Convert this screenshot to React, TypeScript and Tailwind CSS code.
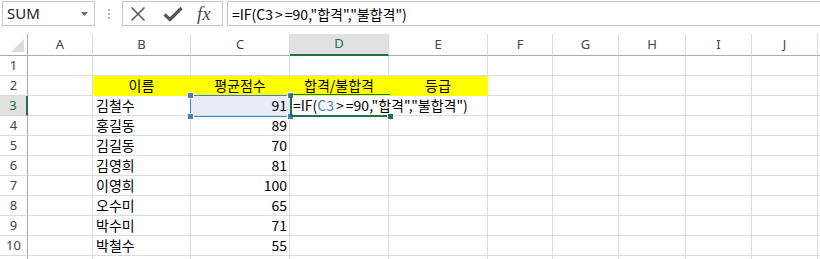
import React from "react"

const colLetters = ["A", "B", "C", "D", "E", "F", "G", "H", "I", "J"]

const rows: { n: number; b?: string; c?: string }[] = [
    { n: 1 },
    { n: 2 },
    { n: 3, b: "김철수", c: "91" },
    { n: 4, b: "홍길동", c: "89" },
    { n: 5, b: "김길동", c: "70" },
    { n: 6, b: "김영희", c: "81" },
    { n: 7, b: "이영희", c: "100" },
    { n: 8, b: "오수미", c: "65" },
    { n: 9, b: "박수미", c: "71" },
    { n: 10, b: "박철수", c: "55" },
    { n: 11 },
]

const headers2 = ["이름", "평균점수", "합격/불합격", "등급"]

const cell = "h-[20px] border-r border-b border-[#dadcdd] text-[14px] leading-[19px] whitespace-nowrap"

const Formula = ({ blue }: { blue?: boolean }) => (
    <span>
        =IF(<span className={blue ? "text-[#3f7bd8]" : ""}>C3</span>
        <span className="mx-[2px]">&gt;</span>=90,"합격","불합격")
    </span>
)

export default function App() {
    return (
        <div className="w-[820px] h-[259px] overflow-hidden bg-white text-black font-['Noto_Sans_CJK_KR','Noto_Sans',sans-serif]">
            {/* formula bar */}
            <div className="flex h-[27px] items-start pt-[1px]">
                <div className="ml-[2px] w-[93px] h-[25px] border border-[#c6c6c6] flex items-center justify-between pl-[4px] pr-[6px]">
                    <span className="text-[15px] text-[#222] font-['Noto_Sans',sans-serif]">SUM</span>
                    <svg width="7" height="4" viewBox="0 0 7 4">
                        <polygon points="0,0 7,0 3.5,4" fill="#6b6b6b" />
                    </svg>
                </div>
                <div className="w-[27px] h-[25px] flex flex-col items-center justify-center gap-[2px]">
                    <span className="w-[2px] h-[2px] bg-[#b5b5b5]" />
                    <span className="w-[2px] h-[2px] bg-[#b5b5b5]" />
                    <span className="w-[2px] h-[2px] bg-[#b5b5b5]" />
                </div>
                <div className="w-[101px] h-[25px] border border-[#c6c6c6] flex items-center pl-[7px]">
                    <svg width="16" height="16" viewBox="0 0 16 16">
                        <path d="M1.5 1.5 L14.5 14.5 M14.5 1.5 L1.5 14.5" stroke="#5a5a5a" strokeWidth="1.6" fill="none" />
                    </svg>
                    <svg width="20" height="16" viewBox="0 0 20 16" className="ml-[17px]">
                        <path d="M1.5 8.5 L7 13.5 L18.5 2" stroke="#555" strokeWidth="3.2" fill="none" />
                    </svg>
                    <span className="ml-[14px] text-[19px] leading-none italic text-[#4a4a4a] font-['Liberation_Serif',serif]">fx</span>
                </div>
                <div className="ml-[4px] flex-1 h-[25px] border-y border-l border-[#c6c6c6] flex items-center pl-[4px] text-[14px] leading-none">
                    <Formula />
                </div>
            </div>

            {/* sheet */}
            <div className="relative mt-[7px] grid grid-cols-[28px_65px_98px_99px_99px_99px_65px_66px_67px_66px_66px_1fr]">
                {/* column headers */}
                <div className="h-[22px] border-r border-b border-r-[#ababab] border-b-[#ababab] flex items-end justify-end pr-[3px] pb-[3px]">
                    <svg width="13" height="13" viewBox="0 0 13 13">
                        <polygon points="13,0 13,13 0,13" fill="#dcdcdc" />
                    </svg>
                </div>
                {colLetters.map((l) => (
                    <div
                        key={l}
                        className={
                            l === "D"
                                ? "h-[22px] border-r border-[#dadcdd] border-b-2 border-b-[#217346] bg-[#e1e1e1] text-[#217346] flex items-center justify-center text-[13px] font-['Noto_Sans',sans-serif]"
                                : "h-[22px] border-r border-r-[#dadcdd] border-b border-b-[#ababab] text-[#444] flex items-center justify-center text-[13px] font-['Noto_Sans',sans-serif]"
                        }
                    >
                        {l}
                    </div>
                ))}
                <div className="h-[22px] border-b border-b-[#ababab]" />

                {rows.map((r) => (
                    <React.Fragment key={r.n}>
                        <div
                            className={
                                r.n === 3
                                    ? "h-[20px] border-r-2 border-r-[#217346] border-b border-b-[#dadcdd] bg-[#e1e1e1] text-[#217346] flex items-center justify-center text-[13px] font-['Noto_Sans',sans-serif]"
                                    : "h-[20px] border-r border-r-[#ababab] border-b border-b-[#dadcdd] text-[#444] flex items-center justify-center text-[13px] font-['Noto_Sans',sans-serif]"
                            }
                        >
                            {r.n <= 10 ? r.n : ""}
                        </div>
                        <div className={cell} />
                        {r.n === 2 ? (
                            headers2.map((h) => (
                                <div key={h} className={`${cell} bg-[#ffff00] border-[#ffff00] text-center`}>
                                    {h}
                                </div>
                            ))
                        ) : (
                            <>
                                <div className={`${cell} pl-[3px]`}>{r.b}</div>
                                <div className={`${cell} text-right pr-[2px] ${r.n === 3 ? "bg-[#e8eef9]" : ""}`}>{r.c}</div>
                                <div className={`${cell} ${r.n === 3 ? "border-r-white pl-[3px]" : ""}`}>
                                    {r.n === 3 && <Formula blue />}
                                </div>
                                <div className={cell} />
                            </>
                        )}
                        <div className={cell} />
                        <div className={cell} />
                        <div className={cell} />
                        <div className={cell} />
                        <div className={cell} />
                        <div className="h-[20px] border-b border-[#dadcdd]" />
                    </React.Fragment>
                ))}

                {/* C3 reference highlight */}
                <div className="absolute left-[190px] top-[61px] w-[101px] h-[22px] border border-[#4a7dc4] pointer-events-none">
                    <span className="absolute -left-[3px] -top-[3px] w-[5px] h-[5px] bg-[#4a7dc4] outline outline-white" />
                    <span className="absolute -right-[3px] -top-[3px] w-[5px] h-[5px] bg-[#4a7dc4] outline outline-white" />
                    <span className="absolute -left-[3px] -bottom-[3px] w-[5px] h-[5px] bg-[#4a7dc4] outline outline-white" />
                    <span className="absolute -right-[3px] -bottom-[3px] w-[5px] h-[5px] bg-[#4a7dc4] outline outline-white" />
                </div>
                {/* D3 active cell */}
                <div className="absolute left-[290px] top-[60px] w-[100px] h-[23px] border-l-2 border-t border-b-2 border-[#217346] pointer-events-none">
                    <span className="absolute -right-[3px] -bottom-[4px] w-[5px] h-[5px] bg-[#217346] outline outline-white" />
                </div>
            </div>
        </div>
    )
}
